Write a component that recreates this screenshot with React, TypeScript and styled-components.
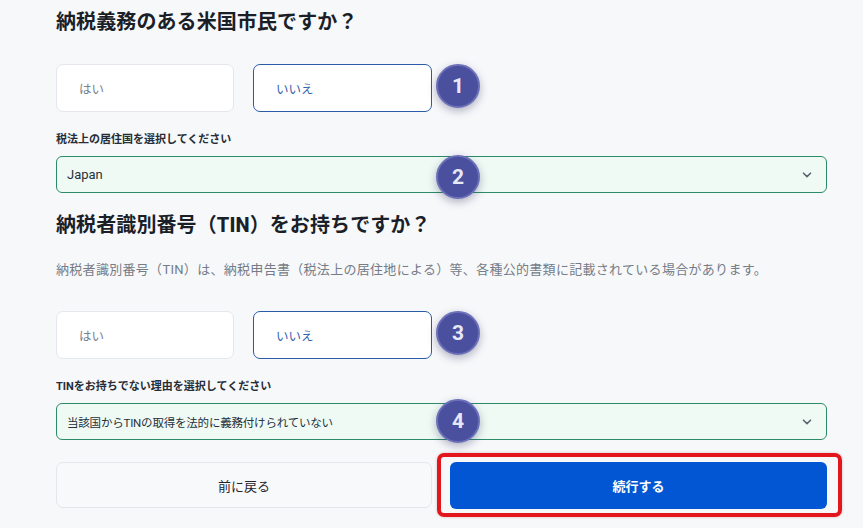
import React from 'react';
import styled, { createGlobalStyle } from 'styled-components';

const GlobalStyle = createGlobalStyle`
  html, body {
    margin: 0;
    padding: 0;
    background: #f7f8fa;
  }
  body {
    font-family: Roboto, "Noto Sans CJK JP", sans-serif;
    color: #1c222b;
  }
`;

type Step = 1 | 2 | 3 | 4;

function StepBadge({ step, shift = 0 }: { step: Step; shift?: number }) {
  return <Badge $shift={shift}>{step}</Badge>;
}

function YesNo({ step, shift }: { step: Step; shift?: number }) {
  return (
    <Field>
      <OptionRow>
        <Option>はい</Option>
        <Option $selected>いいえ</Option>
      </OptionRow>
      <StepBadge step={step} shift={shift} />
    </Field>
  );
}

function SelectBox({
  label,
  value,
  step,
  shift,
  tight,
}: {
  label: string;
  value: string;
  step: Step;
  shift?: number;
  tight?: boolean;
}) {
  return (
    <>
      <Label>{label}</Label>
      <Field>
        <Select $tight={tight}>
          <span>{value}</span>
          <svg width="10" height="6" viewBox="0 0 10 6">
            <path
              d="M1.5 1.2 5 4.6 8.5 1.2"
              fill="none"
              stroke="#5b6470"
              strokeWidth="1.6"
              strokeLinecap="round"
              strokeLinejoin="round"
            />
          </svg>
        </Select>
        <StepBadge step={step} shift={shift} />
      </Field>
    </>
  );
}

function App() {
  return (
    <Page>
      <GlobalStyle />
      <Form>
        <Heading>納税義務のある米国市民ですか？</Heading>
        <Section $top={28}>
          <YesNo step={1} shift={-2} />
        </Section>
        <Section $top={20}>
          <SelectBox
            label="税法上の居住国を選択してください"
            value="Japan"
            step={2}
            shift={2}
          />
        </Section>
        <Heading $top={18}>
          納税者識別番号（<b>TIN</b>）をお持ちですか？
        </Heading>
        <Description>
          納税者識別番号（TIN）は、納税申告書（税法上の居住地による）等、各種公的書類に記載されている場合があります。
        </Description>
        <Section $top={31}>
          <YesNo step={3} shift={-2} />
        </Section>
        <Section $top={20}>
          <SelectBox
            label="TINをお持ちでない理由を選択してください"
            value="当該国からTINの取得を法的に義務付けられていない"
            step={4}
            shift={-1}
            tight
          />
        </Section>
        <Actions>
          <BackButton>前に戻る</BackButton>
          <Highlight>
            <NextButton>続行する</NextButton>
          </Highlight>
        </Actions>
      </Form>
    </Page>
  );
}

export default App;

const Page = styled.div`
  width: 863px;
  height: 528px;
  overflow: hidden;
  padding: 8px 36px 0 56px;
  box-sizing: border-box;
`;

const Form = styled.div`
  width: 771px;
  display: flex;
  flex-direction: column;
`;

const Heading = styled.h2<{ $top?: number }>`
  margin: ${({ $top }) => $top ?? 0}px 0 0;
  font-size: 20px;
  line-height: 28px;
  font-weight: 700;
  color: #1a1f28;
  letter-spacing: 0.1px;

  b {
    font-weight: 800;
  }
`;

const Description = styled.p`
  margin: 21px 0 0;
  font-size: 13px;
  line-height: 20px;
  letter-spacing: 0.3px;
  color: #757c87;
  white-space: nowrap;
`;

const Section = styled.div<{ $top: number }>`
  margin-top: ${({ $top }) => $top}px;
  display: flex;
  flex-direction: column;
`;

const Field = styled.div`
  position: relative;
`;

const OptionRow = styled.div`
  display: grid;
  grid-template-columns: 178px 179px;
  gap: 19px;
`;

const Option = styled.div<{ $selected?: boolean }>`
  height: 48px;
  box-sizing: border-box;
  display: flex;
  align-items: center;
  padding-left: 22px;
  background: #ffffff;
  border: 1px solid ${({ $selected }) => ($selected ? '#2a5ba6' : '#e4e7eb')};
  border-radius: 7px;
  font-size: 12.5px;
  color: ${({ $selected }) => ($selected ? '#2f5fae' : '#7a818b')};
`;

const Label = styled.div`
  font-size: 11px;
  line-height: 16px;
  font-weight: 700;
  color: #262d37;
  margin-bottom: 8px;
`;

const Select = styled.div<{ $tight?: boolean }>`
  height: 37px;
  box-sizing: border-box;
  display: flex;
  align-items: center;
  justify-content: space-between;
  padding: 0 14px 0 10px;
  background: #effaf5;
  border: 1px solid #2c8c68;
  border-radius: 6px;
  font-size: ${({ $tight }) => ($tight ? '11.5px' : '13px')};
  letter-spacing: ${({ $tight }) => ($tight ? '-0.2px' : '0')};
  color: #27303a;
`;

const Badge = styled.div<{ $shift: number }>`
  position: absolute;
  left: 380px;
  top: 50%;
  transform: translateY(calc(-50% + ${({ $shift }) => $shift}px));
  width: 44px;
  height: 44px;
  box-sizing: border-box;
  border-radius: 50%;
  background: #4a4f9e;
  border: 2px solid #6b70b9;
  box-shadow: 0 3px 8px rgba(40, 44, 90, 0.35);
  display: flex;
  align-items: center;
  justify-content: center;
  font-family: Roboto, sans-serif;
  font-size: 21px;
  font-weight: 700;
  color: #e6e8f7;
`;

const Actions = styled.div`
  margin-top: 22px;
  display: grid;
  grid-template-columns: 376px 377px;
  gap: 18px;
`;

const BackButton = styled.button`
  height: 46px;
  border: 1px solid #e3e6ea;
  border-radius: 7px;
  background: #f8f9fb;
  font-family: inherit;
  font-size: 13px;
  color: #1f2630;
`;

const Highlight = styled.div`
  position: relative;
  display: flex;

  &::after {
    content: '';
    position: absolute;
    top: -9px;
    left: -13px;
    right: -15px;
    bottom: -8px;
    border: 4px solid #e2161c;
    border-radius: 7px;
    box-shadow: 0 0 3px rgba(120, 0, 0, 0.25);
    pointer-events: none;
  }
`;

const NextButton = styled.button`
  flex: 1;
  height: 47px;
  border: none;
  border-radius: 6px;
  background: #0256d4;
  font-family: inherit;
  font-size: 13px;
  font-weight: 700;
  color: #ffffff;
`;
